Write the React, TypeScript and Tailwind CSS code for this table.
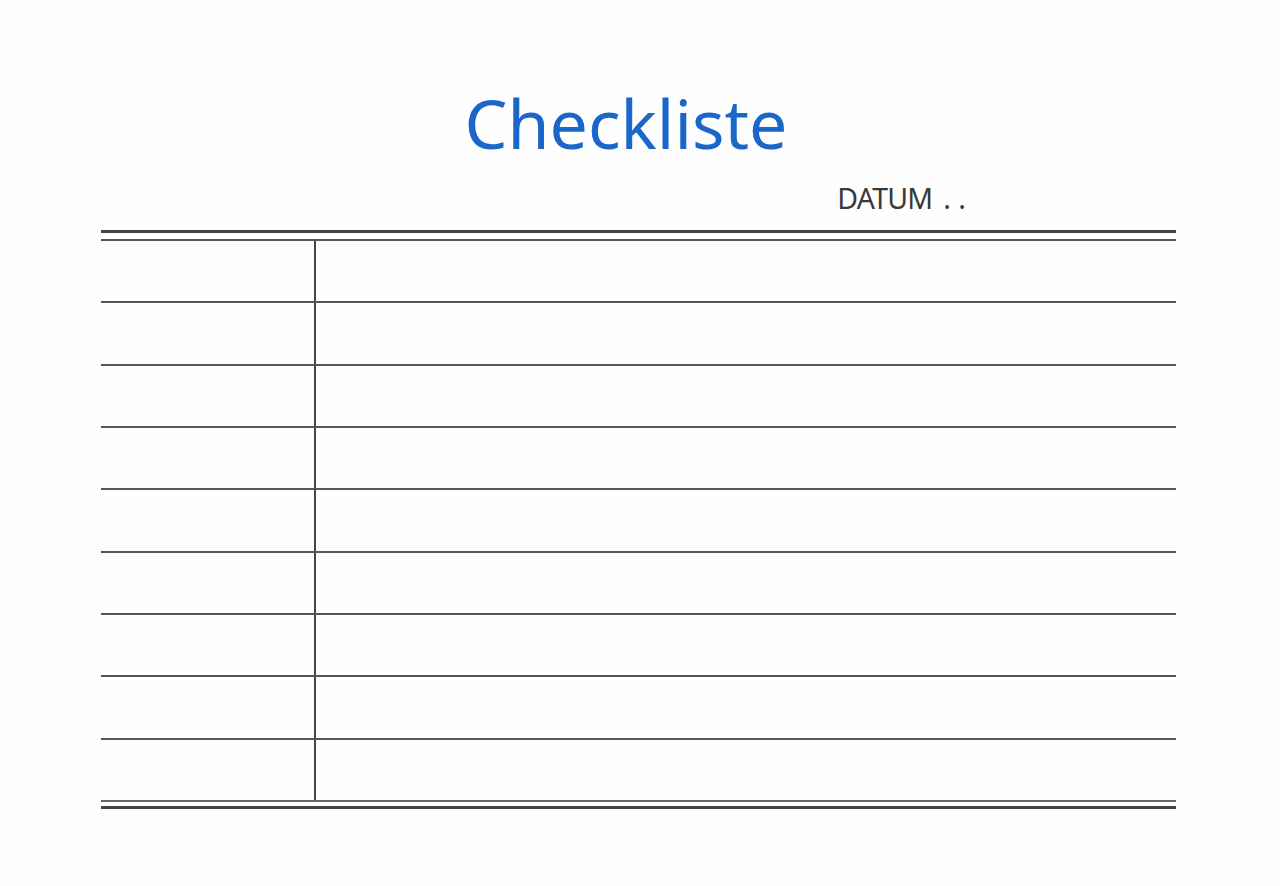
import React from "react";

// Jumlah baris kosong di checklist
const rows = Array.from({ length: 9 }, (_, i) => i);

const App: React.FC = () => {
  return (
    <div className="w-full h-[886px] bg-[#fefefe] font-['Noto_Sans',sans-serif]">
      {/* Judul */}
      <div className="flex justify-center pt-[82px] pr-[28px]">
        <h1 className="text-[68px] leading-[82px] text-[#1a66c9] font-normal">
          Checkliste
        </h1>
      </div>

      {/* Datum */}
      <div className="w-[1075px] ml-[101px] flex justify-end pr-[210px] mt-[15px]">
        <span className="text-[28.5px] leading-[38px] text-[#3a3a3a] tracking-[-0.8px]">
          DATUM
        </span>
        <span className="text-[28.5px] leading-[38px] text-[#3a3a3a] ml-[11px]">
          . .
        </span>
      </div>

      {/* Tabel */}
      <div className="w-[1075px] ml-[101px] mt-[13px]">
        <div className="h-[3px] bg-[#444]" />
        <div className="h-[6px]" />
        <div className="h-[2px] bg-[#555]" />
        {rows.map((r) => (
          <React.Fragment key={r}>
            <div className="flex">
              <div className="w-[213px] h-[60.33px]" />
              <div className="w-[2px] bg-[#444]" />
              <div className="flex-1" />
            </div>
            {r < rows.length - 1 && <div className="h-[2px] bg-[#555]" />}
          </React.Fragment>
        ))}
        <div className="h-[2px] bg-[#666]" />
        <div className="h-[4px]" />
        <div className="h-[3px] bg-[#444]" />
      </div>
    </div>
  );
};

export default App;
